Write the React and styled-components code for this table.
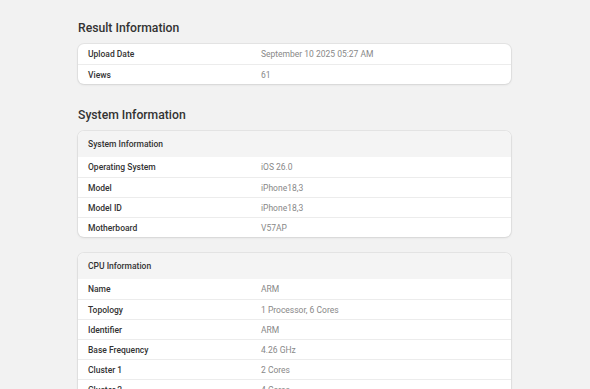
import React from "react";
import styled, { createGlobalStyle } from "styled-components";

const Global = createGlobalStyle`
  html, body { margin: 0; padding: 0; background: #f2f2f2; }
  body { font-family: Roboto, "Liberation Sans", Arial, sans-serif; }
  * { box-sizing: border-box; }
`;

const Page = styled.div`
  padding: 20px 0 0 78px;
  width: 511px;
`;

const Title = styled.h2`
  margin: 0 0 8px;
  font-size: 12.2px;
  line-height: 16px;
  font-weight: 500;
  color: #333;
`;

const Card = styled.div`
  background: #fff;
  border-radius: 6px;
  box-shadow: 0 0 0 1px rgba(0, 0, 0, 0.05), 0 1px 3px rgba(0, 0, 0, 0.08);
  overflow: hidden;
  margin-bottom: ${(p) => p.$mb ?? 16}px;
`;

const Header = styled.div`
  height: 26px;
  display: flex;
  align-items: center;
  padding: 0 10px;
  background: #f4f4f4;
  font-size: 8.5px;
  font-weight: 500;
  color: #333;
`;

const Row = styled.div`
  display: grid;
  grid-template-columns: 173px 1fr;
  height: 20px;
  align-items: center;
  padding: 0 10px;
  font-size: 8.5px;
  & + & { border-top: 1px solid #ececec; }
`;

const Label = styled.span`
  font-weight: 500;
  color: #333;
`;

const Value = styled.span`
  color: #888;
`;

const Section = ({ title, rows, mb }) => (
  <Card $mb={mb}>
    {title && <Header>{title}</Header>}
    {rows.map(([l, v]) => (
      <Row key={l}>
        <Label>{l}</Label>
        <Value>{v}</Value>
      </Row>
    ))}
  </Card>
);

export default function App() {
  return (
    <>
      <Global />
      <Page>
        <Title>Result Information</Title>
        <Section
          mb={23}
          rows={[
            ["Upload Date", "September 10 2025 05:27 AM"],
            ["Views", "61"],
          ]}
        />
        <Title>System Information</Title>
        <Section
          title="System Information"
          rows={[
            ["Operating System", "iOS 26.0"],
            ["Model", "iPhone18,3"],
            ["Model ID", "iPhone18,3"],
            ["Motherboard", "V57AP"],
          ]}
        />
        <Section
          title="CPU Information"
          rows={[
            ["Name", "ARM"],
            ["Topology", "1 Processor, 6 Cores"],
            ["Identifier", "ARM"],
            ["Base Frequency", "4.26 GHz"],
            ["Cluster 1", "2 Cores"],
            ["Cluster 2", "4 Cores"],
          ]}
        />
      </Page>
    </>
  );
}
